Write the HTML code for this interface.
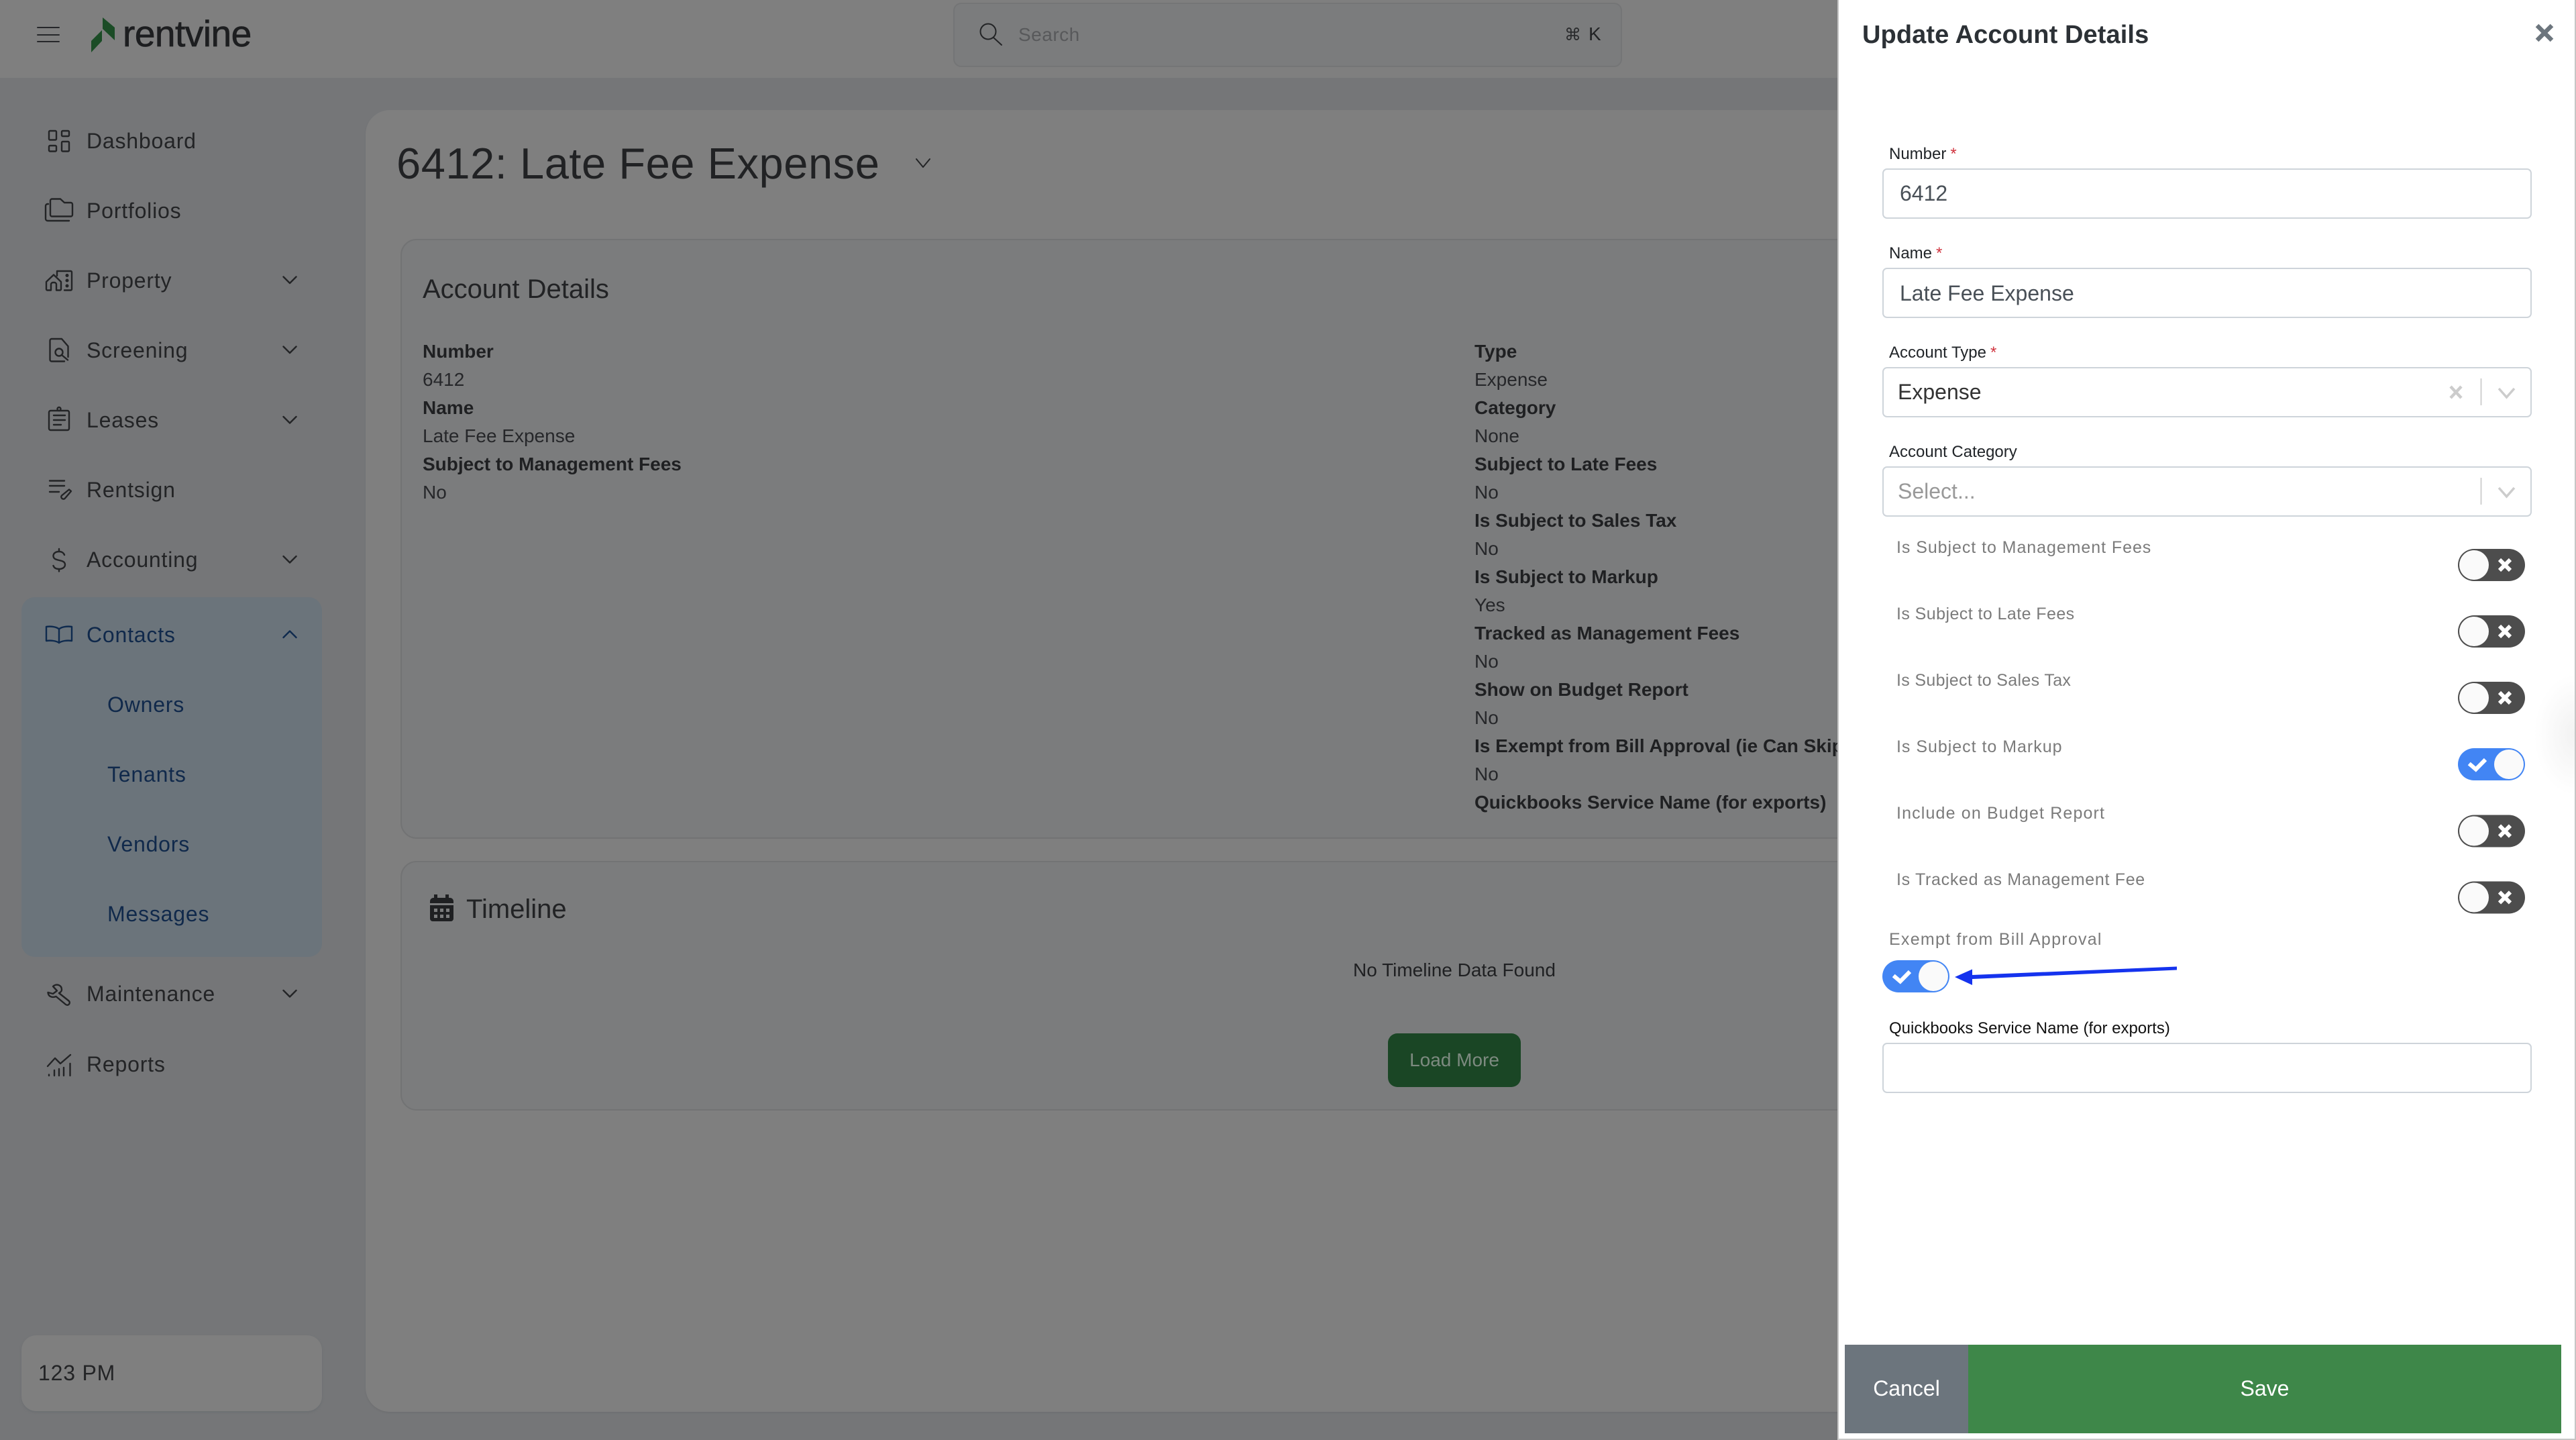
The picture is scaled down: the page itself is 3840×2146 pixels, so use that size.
<!DOCTYPE html>
<html lang="en"><head><meta charset="utf-8"><title>Update Account Details</title>
<style>
html,body{margin:0;padding:0;width:3840px;height:2146px;overflow:hidden;background:#757678}
body{position:relative;font-family:"Liberation Sans",sans-serif;color:#232426}
.a{position:absolute;box-sizing:border-box}
.t{position:absolute;white-space:nowrap;line-height:0}
.n{font-size:32px;letter-spacing:.8px;left:129px}
.c{color:#10294b}
.b{font-size:28px;font-weight:700;color:#1f2022}
.r{font-size:28px;color:#26272a}
.l{font-size:24px;color:#212529;left:2816px}
.l i{font-style:normal;color:#d0343f;margin-left:6px}
.m{font-size:25px;color:#7b7b7b;left:2827px}
.inp{left:2806px;width:968px;height:75px;background:#fff;border:2.5px solid #ced4da;border-radius:7px}
.sv{position:absolute;overflow:visible}
svg{display:block}
</style></head><body>

<!-- header -->
<div class="a" style="left:0;top:0;width:2741px;height:116px;background:#7f7f7f"></div>
<div class="a" style="left:1421px;top:4px;width:997px;height:96px;background:#7b7c7d;border:2px solid #747576;border-radius:12px"></div>
<div class="t" style="left:1518px;top:52px;font-size:28px;letter-spacing:.5px;color:#58595b">Search</div>
<div class="t" style="left:2332px;top:52px;font-size:25px;font-family:'DejaVu Sans',sans-serif;color:#2a2b2d">⌘</div>
<div class="t" style="left:2368px;top:51px;font-size:28px;color:#222325">K</div>
<div class="t" style="left:183px;top:50px;font-size:55px;letter-spacing:-.5px;color:#1d1e20;-webkit-text-stroke:.7px #1d1e20">rentvine</div>

<!-- main card -->
<div class="a" style="left:545px;top:164px;width:2300px;height:1940px;background:#7f7f7f;border-radius:36px;box-shadow:0 2px 2px #6f7072"></div>
<div class="t" style="left:591px;top:244px;font-size:65px;letter-spacing:.55px;color:#212224">6412: Late Fee Expense</div>

<div class="a" style="left:597px;top:356px;width:2300px;height:894px;background:#7b7c7d;border:2px solid #727374;border-radius:24px"></div>
<div class="t" style="left:630px;top:431px;font-size:40px;color:#222325">Account Details</div>
<div class="t b" style="left:630px;top:524px">Number</div>
<div class="t r" style="left:630px;top:566px">6412</div>
<div class="t b" style="left:630px;top:608px">Name</div>
<div class="t r" style="left:630px;top:650px">Late Fee Expense</div>
<div class="t b" style="left:630px;top:692px">Subject to Management Fees</div>
<div class="t r" style="left:630px;top:734px">No</div>

<div class="t b" style="left:2198px;top:524px">Type</div>
<div class="t r" style="left:2198px;top:566px">Expense</div>
<div class="t b" style="left:2198px;top:608px">Category</div>
<div class="t r" style="left:2198px;top:650px">None</div>
<div class="t b" style="left:2198px;top:692px">Subject to Late Fees</div>
<div class="t r" style="left:2198px;top:734px">No</div>
<div class="t b" style="left:2198px;top:776px">Is Subject to Sales Tax</div>
<div class="t r" style="left:2198px;top:818px">No</div>
<div class="t b" style="left:2198px;top:860px">Is Subject to Markup</div>
<div class="t r" style="left:2198px;top:902px">Yes</div>
<div class="t b" style="left:2198px;top:944px">Tracked as Management Fees</div>
<div class="t r" style="left:2198px;top:986px">No</div>
<div class="t b" style="left:2198px;top:1028px">Show on Budget Report</div>
<div class="t r" style="left:2198px;top:1070px">No</div>
<div class="t b" style="left:2198px;top:1112px">Is Exempt from Bill Approval (ie Can Skip)</div>
<div class="t r" style="left:2198px;top:1154px">No</div>
<div class="t b" style="left:2198px;top:1196px">Quickbooks Service Name (for exports)</div>

<div class="a" style="left:597px;top:1283px;width:2300px;height:372px;background:#7b7c7d;border:2px solid #727374;border-radius:24px"></div>
<div class="t" style="left:695px;top:1355px;font-size:40px;color:#222325">Timeline</div>
<div class="t" style="left:2017px;top:1446px;font-size:28px;color:#1f2022">No Timeline Data Found</div>
<div class="a" style="left:2069px;top:1540px;width:198px;height:80px;background:#1a4625;border-radius:14px"></div>
<div class="t" style="left:2069px;width:198px;text-align:center;top:1580px;font-size:28px;color:#7d8a80">Load More</div>

<!-- sidebar -->
<div class="a" style="left:32px;top:890px;width:448px;height:536px;background:#6b747b;border-radius:20px"></div>
<div class="t n" style="top:210px">Dashboard</div>
<div class="t n" style="top:314px">Portfolios</div>
<div class="t n" style="top:418px">Property</div>
<div class="t n" style="top:522px">Screening</div>
<div class="t n" style="top:626px">Leases</div>
<div class="t n" style="top:730px">Rentsign</div>
<div class="t n" style="top:834px">Accounting</div>
<div class="t n c" style="top:946px">Contacts</div>
<div class="t n c" style="left:160px;top:1050px">Owners</div>
<div class="t n c" style="left:160px;top:1154px">Tenants</div>
<div class="t n c" style="left:160px;top:1258px">Vendors</div>
<div class="t n c" style="left:160px;top:1362px">Messages</div>
<div class="t n" style="top:1481px">Maintenance</div>
<div class="t n" style="top:1586px">Reports</div>
<div class="a" style="left:32px;top:1990px;width:448px;height:113px;background:#7f7f7f;border-radius:22px;box-shadow:0 2px 3px #6c6f72"></div>
<div class="t" style="left:57px;top:2046px;font-size:32px;letter-spacing:.8px;color:#232426">123 PM</div>

<!-- page icons -->
<svg class="sv" style="left:0;top:0" width="2741" height="2146" viewBox="0 0 2741 2146" fill="none" stroke="#232426" stroke-width="2.4" stroke-linecap="round" stroke-linejoin="round">
  <path d="M56 41H88M56 52H88M56 62H88" stroke-width="2" stroke="#26272a"/>
  <path d="M153 26L171 41V60L153 43Z" fill="#1b4c26" stroke="none"/>
  <path d="M152 45V61L136 78V61Z" fill="#1b4c26" stroke="none"/>
  <!-- dashboard -->
  <rect x="73" y="195" width="11" height="13.5" rx="1.5"/><rect x="92" y="195" width="11" height="8" rx="1.5"/>
  <rect x="73" y="217" width="11" height="8.5" rx="1.5"/><rect x="92" y="211" width="11" height="14.5" rx="1.5"/>
  <!-- portfolios -->
  <path d="M75 320V299a2.5 2.5 0 0 1 2.5-2.5H90l6 5.5h9.5a2.5 2.5 0 0 1 2.5 2.5V320a2.5 2.5 0 0 1-2.5 2.5H77.5A2.5 2.5 0 0 1 75 320Z"/>
  <path d="M72 304H71a3 3 0 0 0-3 3V326a3 3 0 0 0 3 3H103"/>
  <!-- property -->
  <path d="M69 431V420L80 409.5L91 420V431a1.5 1.5 0 0 1-1.5 1.5H84V424a3 3 0 0 0-3-3H79a3 3 0 0 0-3 3V432.5H70.5A1.5 1.5 0 0 1 69 431Z"/>
  <path d="M85 411V404H105.5a1.5 1.5 0 0 1 1.5 1.5V431a1.5 1.5 0 0 1-1.5 1.5H96"/>
  <circle cx="100" cy="410.5" r="1.3" fill="#232426"/><circle cx="100" cy="418" r="1.3" fill="#232426"/><circle cx="100" cy="426" r="1.3" fill="#232426"/>
  <!-- screening -->
  <path d="M101.5 532V516L92 505H77a2.5 2.5 0 0 0-2.5 2.5V536a2.5 2.5 0 0 0 2.5 2.5H96"/>
  <circle cx="88" cy="525" r="5.5"/><path d="M92 529L101 536.5"/>
  <!-- leases -->
  <rect x="73" y="612" width="30" height="29" rx="2.5"/><circle cx="88" cy="609.5" r="2.5"/>
  <path d="M80 619H97M80 626H97M80 633H91"/>
  <!-- rentsign -->
  <path d="M74 716.5H96M74 724H96M74 733H88"/>
  <path d="M103 729.5L106 732L97 742.5a3.2 3.2 0 0 1-5-4Z"/>
  <!-- dollar -->
  <path d="M96 827c-1-3-4-5-8-5c-5 0-8.500 2.500-8.500 6.500c0 9 17.500 4 17.500 13c0 4-4 6.500-9 6.500c-4.500 0-7.500-2-8.500-5M88 818v4M88 848v3.500"/>
  <!-- contacts -->
  <path d="M88 937.500C84 934 76 933 69 934V955C76 954 84 955 88 958C92 955 100 954 107 955V934C100 933 92 934 88 937.500V958" stroke="#0e2a4e"/>
  <!-- wrench -->
  <path d="M88 1480L102.500 1491.500a3.500 3.500 0 0 1-4.500 5.500L83.500 1485C79 1487 72 1486 71.500 1479L79 1481L85 1476.500L79 1470C84 1465.500 92 1467.500 92 1475C92 1477 90 1479 88 1480Z"/>
  <!-- reports -->
  <path d="M71 1589L82 1577L90 1585L105 1572"/>
  <path d="M73 1601.500V1603M81 1595V1603M88 1593V1603M95 1591V1603M104.500 1585V1603"/>
  <!-- chevrons -->
  <path d="M422.500 412.500L432 422L441.500 412.500M422.500 516.500L432 526L441.500 516.500M422.500 621L432 630.500L441.500 621M422.500 829L432 838.500L441.500 829M422.500 1476L432 1485.500L441.500 1476"/>
  <path d="M422.500 950L432 940.500L441.500 950" stroke="#0e2a4e"/>
  <!-- title chevron -->
  <path d="M1366 237L1376 249L1386 237" stroke-width="2"/>
  <!-- magnifier -->
  <circle cx="1473" cy="47" r="11.500" stroke-width="2"/><path d="M1481 56L1493 67" stroke-width="2"/>
  <!-- calendar -->
  <path d="M647 1333h5v6h-5zM664 1333h5v6h-5z" fill="#1f2022" stroke="none"/>
  <path d="M645 1338h26a5 5 0 0 1 5 5v3h-35v-3a5 5 0 0 1 5-5ZM641 1349h35v20a4 4 0 0 1-4 4h-27a4 4 0 0 1-4-4Z" fill="#1f2022" stroke="none"/>
  <path d="M647 1354h5v5h-5zM656 1354h5v5h-5zM665 1354h5v5h-5zM647 1363h5v5h-5zM656 1363h5v5h-5zM665 1363h5v5h-5z" fill="#7b7c7d" stroke="none"/>
</svg>

<!-- drawer -->
<div class="a" style="left:2739px;top:0;width:1101px;height:2146px;background:#c6c6c6"></div>
<div class="a" style="left:2741px;top:0;width:1097px;height:2144px;background:radial-gradient(ellipse 60px 90px at 100% 1095px,#f2f2f2,#ffffff 100%) #fff"></div>
<div class="t" style="left:2776px;top:52px;font-size:38px;letter-spacing:.1px;font-weight:700;color:#2c3136">Update Account Details</div>

<div class="t l" style="top:230px">Number<i>*</i></div>
<div class="a inp" style="top:251px"></div>
<div class="t" style="left:2832px;top:288px;font-size:32px;color:#495057">6412</div>
<div class="t l" style="top:378px">Name<i>*</i></div>
<div class="a inp" style="top:399px"></div>
<div class="t" style="left:2832px;top:437px;font-size:32px;color:#495057">Late Fee Expense</div>
<div class="t l" style="top:526px">Account Type<i>*</i></div>
<div class="a inp" style="top:547px"></div>
<div class="t" style="left:2829px;top:584px;font-size:32px;color:#333">Expense</div>
<div class="t l" style="top:674px">Account Category</div>
<div class="a inp" style="top:695px"></div>
<div class="t" style="left:2829px;top:732px;font-size:32px;color:#999">Select...</div>

<div class="t m" style="top:816px;letter-spacing:.94px">Is Subject to Management Fees</div>
<div class="t m" style="top:915px;letter-spacing:.43px">Is Subject to Late Fees</div>
<div class="t m" style="top:1014px;letter-spacing:.34px">Is Subject to Sales Tax</div>
<div class="t m" style="top:1113px;letter-spacing:.98px">Is Subject to Markup</div>
<div class="t m" style="top:1212px;letter-spacing:1.15px">Include on Budget Report</div>
<div class="t m" style="top:1311px;letter-spacing:.69px">Is Tracked as Management Fee</div>
<div class="t m" style="left:2816px;top:1400px;letter-spacing:1.26px">Exempt from Bill Approval</div>
<div class="t l" style="top:1533px;color:#111">Quickbooks Service Name (for exports)</div>
<div class="a inp" style="top:1554px"></div>

<!-- footer buttons -->
<div class="a" style="left:2750px;top:2004px;width:184px;height:132px;background:#6c757d"></div>
<div class="a" style="left:2934px;top:2004px;width:884px;height:132px;background:#3e8749"></div>
<div class="t" style="left:2750px;width:184px;text-align:center;top:2069px;font-size:32px;color:#fff">Cancel</div>
<div class="t" style="left:2934px;width:884px;text-align:center;top:2069px;font-size:32px;color:#fff">Save</div>

<!-- drawer icons & toggles -->
<svg class="sv" style="left:2741px;top:0" width="1099" height="2146" viewBox="2741 0 1099 2146" fill="none">
  <path d="M3782 38L3804 60M3804 38L3782 60" stroke="#6c757d" stroke-width="6.500"/>
  <path d="M3653 576L3669 593M3669 576L3653 593" stroke="#ccc" stroke-width="4.500"/>
  <path d="M3698.500 564V604M3698.500 712V752" stroke="#ccc" stroke-width="1.800"/>
  <path d="M3725 579L3736.500 592L3748 579M3725 727L3736.500 740L3748 727" stroke="#ccc" stroke-width="3.500"/>

  <g id="off">
    <rect x="3664" y="818" width="100" height="48" rx="24" fill="#4d4d4d"/><circle cx="3688" cy="842" r="22" fill="#fafafa"/>
    <path d="M3726 834L3742 850M3742 834L3726 850" stroke="#fff" stroke-width="6"/>
  </g>
  <g transform="translate(0 99)">
    <rect x="3664" y="818" width="100" height="48" rx="24" fill="#4d4d4d"/><circle cx="3688" cy="842" r="22" fill="#fafafa"/>
    <path d="M3726 834L3742 850M3742 834L3726 850" stroke="#fff" stroke-width="6"/>
  </g>
  <g transform="translate(0 198)">
    <rect x="3664" y="818" width="100" height="48" rx="24" fill="#4d4d4d"/><circle cx="3688" cy="842" r="22" fill="#fafafa"/>
    <path d="M3726 834L3742 850M3742 834L3726 850" stroke="#fff" stroke-width="6"/>
  </g>
  <g transform="translate(0 396.500)">
    <rect x="3664" y="818" width="100" height="48" rx="24" fill="#4d4d4d"/><circle cx="3688" cy="842" r="22" fill="#fafafa"/>
    <path d="M3726 834L3742 850M3742 834L3726 850" stroke="#fff" stroke-width="6"/>
  </g>
  <g transform="translate(0 495.500)">
    <rect x="3664" y="818" width="100" height="48" rx="24" fill="#4d4d4d"/><circle cx="3688" cy="842" r="22" fill="#fafafa"/>
    <path d="M3726 834L3742 850M3742 834L3726 850" stroke="#fff" stroke-width="6"/>
  </g>
  <g transform="translate(3664 1115)">
    <rect width="100" height="48" rx="24" fill="#4285f4"/><circle cx="76" cy="24" r="22" fill="#fafafa"/>
    <path d="M16.700 23L26.700 31.500L41 17" stroke="#fff" stroke-width="6"/>
  </g>
  <g transform="translate(2806 1431)">
    <rect width="100" height="48" rx="24" fill="#4285f4"/><circle cx="76" cy="24" r="22" fill="#fafafa"/>
    <path d="M16.700 23L26.700 31.500L41 17" stroke="#fff" stroke-width="6"/>
  </g>

  <path d="M3245 1440.500V1445.500L2940 1459V1468L2914 1456L2940 1444.500V1453Z" fill="#1533ee"/>
</svg>
</body></html>
